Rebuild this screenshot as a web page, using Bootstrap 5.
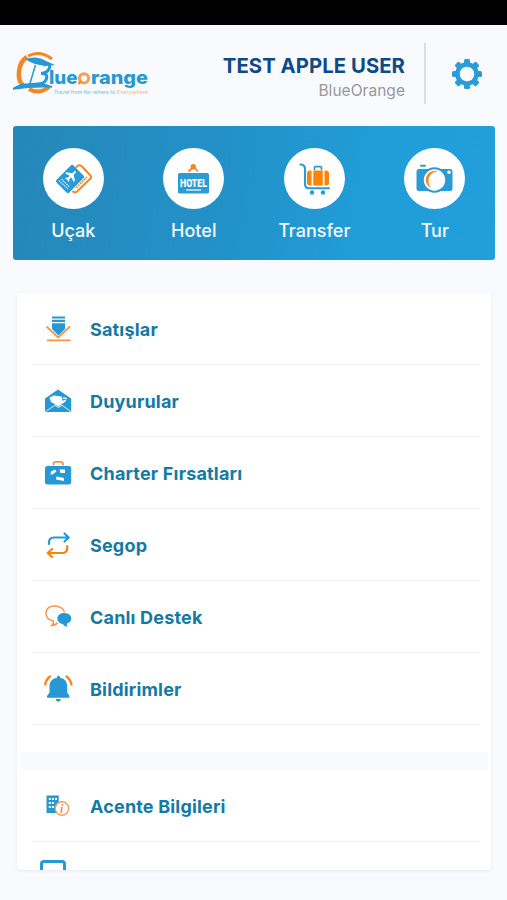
<!DOCTYPE html>
<html lang="tr">
<head>
<meta charset="utf-8">
<meta name="viewport" content="width=device-width, initial-scale=1">
<title>BlueOrange</title>
<link href="https://cdn.jsdelivr.net/npm/bootstrap@5.3.0/dist/css/bootstrap.min.css" rel="stylesheet">
<style>
body{font-family:Inter,"Liberation Sans",sans-serif;background:#f9fafe;height:900px;overflow:hidden}
.status-strip{height:25px;background:#000}
.top-head{height:101px;padding:0 25px 4px 13px}
.user-box{padding-top:9px}
.user-name{font-size:20.3px;font-weight:700;line-height:24px;color:#0e4a87;letter-spacing:.06px}
.user-firm{font-size:15.5px;line-height:25px;color:#96979b;letter-spacing:.04px}
.split{width:2px;height:61px;background:#dcdee2;margin:0 26px 0 19px}
.services{margin:0 12px 0 13px;height:134px;border-radius:3px;background:linear-gradient(100deg,#2687b9 0%,#2293cb 50%,#219ed9 75%,#229eda 100%);padding-top:22px}
.service{color:#f4fbff;font-size:18px;font-weight:500;line-height:24px}
.disc{width:61px;height:61px;margin-bottom:10px}
.menu-card{margin:33px 16px 0 17px;height:577px;border-radius:4px;background:#fff;box-shadow:0 1px 3px rgba(50,70,110,.09)}
.menu-row{height:72px;margin:0 12px 0 15px;padding:2px 0 0 11px;border-bottom:1px solid #eeeff1;color:#147aa3;font-size:18px;font-weight:700;line-height:24px;letter-spacing:.18px}
.menu-row svg{width:30px;height:30px;margin:-2px 17px 0 0}
.band{height:18px;margin:27px 3px 0;background:#f9fafd}
</style>
</head>
<body>
<div class="status-strip"></div>
<header class="top-head d-flex align-items-center">
  <svg width="137" height="46" viewBox="0 0 137 46" role="img" aria-label="BlueOrange">
    <g fill="none" stroke="#f5851f">
      <path d="M14 6C4 12 4 30 10 34" stroke-width="4.5"/>
      <path d="M15 5Q27-1 39 8" stroke-width="3"/>
      <path d="M16 38Q26 44 36 36" stroke-width="4"/>
    </g>
    <path d="M12 8Q24 4 33 10L42 14Q25 17 12 8Z" fill="#2699d4"/>
    <path d="M0 38Q6 33 15 33Q28 31 39 36Q20 35 0 38Z" fill="#2699d4" stroke="#2699d4" stroke-width="1.6"/>
    <path d="M22.5 14L16.5 34" stroke="#2699d4" stroke-width="1.5"/>
    <path d="M30 14Q39 11 36 18Q34 22 28 22.5Q36 22 33 29Q31 33 24 33" fill="none" stroke="#2699d4" stroke-width="3"/>
    <g font-family="Inter,sans-serif" font-weight="800" font-size="18.5" fill="#2699d4">
      <text x="36" y="33" textLength="28.500" lengthAdjust="spacingAndGlyphs">lue</text>
      <text x="78" y="33" textLength="57" lengthAdjust="spacingAndGlyphs">range</text>
    </g>
    <circle cx="71" cy="27.3" r="4.6" fill="none" stroke="#f5a052" stroke-width="3"/>
    <path d="M65.500 33l2.500-3" stroke="#f5851f" stroke-width="2"/>
    <g font-family="Inter,sans-serif" font-size="5" font-weight="500">
      <text x="41" y="42.500" fill="#7fc0e3" textLength="61">Travel from No-where to</text>
      <text x="104" y="42.500" fill="#f8b683" textLength="31">Everywhere</text>
    </g>
  </svg>
  <div class="user-box ms-auto text-end">
    <div class="user-name">TEST APPLE USER</div>
    <div class="user-firm">BlueOrange</div>
  </div>
  <div class="split"></div>
  <svg width="30" height="30" viewBox="-15 -15 30 30" aria-label="Ayarlar">
    <g fill="#2a9dd8"><rect x="-3" y="-15" width="6" height="30" rx="1.5"/><rect x="-3" y="-15" width="6" height="30" rx="1.5" transform="rotate(45)"/><rect x="-3" y="-15" width="6" height="30" rx="1.5" transform="rotate(90)"/><rect x="-3" y="-15" width="6" height="30" rx="1.5" transform="rotate(135)"/><circle r="11.8"/></g>
    <circle r="7.3" fill="#f9fafe"/>
  </svg>
</header>

<nav class="services row g-0 text-center">
  <div class="service col-3">
    <svg class="disc d-block mx-auto" viewBox="0 0 61 61"><circle cx="30.5" cy="30.5" r="30.5" fill="#fff"/>
      <path d="M33 19.5L35 17.5Q37 16.5 39 18.5L47.5 27.5Q49 29 47.5 30.5L34 43.5Q32 45.5 29.5 43" fill="none" stroke="#f5851f" stroke-width="1.9"/>
      <path d="M33 40L44 29" stroke="#f5851f" stroke-width="1.6" stroke-dasharray="2 .8"/>
      <rect x="-12" y="-9" width="24" height="18" rx="2" transform="translate(27 31) rotate(-45)" fill="#2b9bd3"/>
      <g transform="translate(28.5 27.5) rotate(45) scale(.95)" fill="#fff"><path d="M0-7Q1.3-6 1.3-2L6.5 1.5V3L1.3 1.5 1 4.5 2.8 6V7L0 6.3-2.8 7V6L-1 4.5-1.3 1.5-6.5 3V1.5L-1.3-2Q-1.3-6 0-7Z"/></g>
      <path d="M16 32.5L25 41M18.5 31L26.5 39" stroke="#d6edfa" stroke-width="1.2" stroke-dasharray="1.6 .7"/>
    </svg>Uçak</div>
  <div class="service col-3">
    <svg class="disc d-block mx-auto" viewBox="0 0 61 61"><circle cx="30.5" cy="30.5" r="30.5" fill="#fff"/>
      <path d="M25.5 23.5L30.5 19L35 23.5" fill="none" stroke="#f5851f" stroke-width="1.7"/><circle cx="30.3" cy="18.8" r="2.7" fill="#f5851f"/>
      <rect x="15" y="25" width="31" height="20.5" rx="1.5" fill="#2b9bd3"/>
      <text x="17" y="38.8" font-family="Roboto,sans-serif" font-size="11.5" font-weight="900" fill="#fff" textLength="27" lengthAdjust="spacingAndGlyphs">HOTEL</text>
      <path d="M23 42H38" stroke="#fff" stroke-width="1.2"/>
    </svg>Hotel</div>
  <div class="service col-3">
    <svg class="disc d-block mx-auto" viewBox="0 0 61 61"><circle cx="30.5" cy="30.5" r="30.5" fill="#fff"/>
      <path d="M16.5 16.5Q21 16.5 21 21V36Q21 40.2 25 40.2H45" fill="none" stroke="#2b9bd3" stroke-width="2.1" stroke-linecap="round"/>
      <path d="M30.5 22V19.5Q30.5 18.7 31.5 18.7H36.5Q37.5 18.7 37.5 19.5V22" fill="none" stroke="#2b9bd3" stroke-width="1.7"/>
      <g fill="#f98407"><path d="M27.5 22.5V37.5H26Q23 37.5 23 34.5V25.5Q23 22.5 26 22.5Z"/><rect x="29.3" y="22.5" width="9.5" height="15"/><path d="M40.5 22.5H42Q45 22.5 45 25.5V34.5Q45 37.5 42 37.5H40.5Z"/></g>
      <circle cx="28" cy="44.5" r="2.2" fill="#2b9bd3"/><circle cx="39" cy="44.5" r="2.2" fill="#2b9bd3"/>
    </svg>Transfer</div>
  <div class="service col-3">
    <svg class="disc d-block mx-auto" viewBox="0 0 61 61"><circle cx="30.5" cy="30.5" r="30.5" fill="#fff"/>
      <rect x="16" y="16.7" width="6" height="2" rx="1" fill="#2b9bd3"/>
      <rect x="12.5" y="21" width="36" height="22" rx="2.5" fill="#2b9bd3"/><circle cx="30.5" cy="32" r="12.8" fill="#2b9bd3"/><circle cx="30.5" cy="32" r="10.7" fill="#fff"/>
      <path d="M27.5 40.8Q20 36 22.2 29Q25 21.5 35 23Q26.5 24 24.7 30Q23.5 36 27.5 40.8Z" fill="#f5851f"/>
      <circle cx="45" cy="24.3" r="1.8" fill="#fff"/>
    </svg>Tur</div>
</nav>

<main class="menu-card overflow-hidden">
  <div class="menu-row d-flex align-items-center">
    <svg viewBox="0 0 30 30"><g fill="#2699d4"><path d="M9 2.5H22V4.5H9ZM9 5.8H22V8H9ZM9 9.2H22V15L15.5 21.5 9 15Z"/></g><path d="M3.5 12.5L15.2 23.5 27 12.5M4 26.3H27.5" fill="none" stroke="#f3954a" stroke-width="1.8"/></svg>
    Satışlar</div>
  <div class="menu-row d-flex align-items-center">
    <svg viewBox="0 0 30 30"><path d="M2 12.5L15 3.5 28.2 12.5V24Q28.2 26 26 26H4Q2 26 2 24Z" fill="#2699d4"/><path d="M6.5 11.5L11 9.5 18 10.5 24 12 22.5 15.5 15.5 20.5 8 16Z" fill="#fff"/><path d="M19.5 9.5L20 14 23 13" fill="none" stroke="#2699d4" stroke-width="1.2"/><path d="M3.5 24.8L12 19.3 15.5 21.5 19 19.3 27 24.8" fill="none" stroke="#d8eefb" stroke-width="1"/></svg>
    Duyurular</div>
  <div class="menu-row d-flex align-items-center">
    <svg viewBox="0 0 30 30"><path d="M10.5 7.5V6Q10.5 3.8 12.5 3.8H17.8Q20 3.8 20 6V7.5" fill="none" stroke="#f3954a" stroke-width="1.8"/><rect x="2" y="8" width="26.2" height="18.5" rx="2.5" fill="#2699d4"/><g fill="#fff"><path d="M8 13.5L12 11.5 13.5 13.5 9.5 16.5 7.5 16.5ZM16.5 11.5H22V15H17.5ZM13.5 18.5L21 20V23L13 21.5Z"/></g></svg>
    Charter Fırsatları</div>
  <div class="menu-row d-flex align-items-center">
    <svg viewBox="0 0 30 30" fill="none" stroke-width="2.2" stroke-linecap="round" stroke-linejoin="round"><path d="M6 14V12.5Q6 7.5 11 7.5H25.5M21.5 3.5L25.7 7.5 21.5 11.5" stroke="#2699d4"/><path d="M24.2 16V18Q24.2 23 19.2 23H5M9 19L4.7 23 9 27" stroke="#f98407"/></svg>
    Segop</div>
  <div class="menu-row d-flex align-items-center">
    <svg viewBox="0 0 30 30"><path d="M21.5 10.3C20 2.5 3 1 3 11C3 15 6 18 10 18.8Q11.3 21.5 8.7 23.5Q12.5 23.5 14.5 20.5" fill="none" stroke="#f3954a" stroke-width="1.4"/><path d="M21 11C26 11 28.3 13.8 28.3 16.5C28.3 19 26.5 20.7 24 21.6Q23.5 23.5 24.7 24.7Q21 24.5 19.7 22C16.5 21.6 14.3 19.2 14.3 16.5C14.3 13.5 17 11 21 11Z" fill="#2699d4"/></svg>
    Canlı Destek</div>
  <div class="menu-row d-flex align-items-center">
    <svg viewBox="0 0 30 30"><path d="M14 3Q14 1.5 15.3 1.5T17 3V3.7C22 4.5 24.2 8 24.2 12V18.5L26.5 22V23.7H4V22L6.5 18.5V12C6.5 8 9 4.5 14 3.7Z" fill="#2699d4"/><path d="M12.5 25H18Q17.5 27.7 15.3 27.7T12.5 25" fill="#2699d4"/><path d="M7 2.5Q3 5.5 2.3 10.5M23.5 2.5Q27.5 5.5 28.5 10.5" fill="none" stroke="#f5851f" stroke-width="2.3" stroke-linecap="round"/></svg>
    Bildirimler</div>
  <div class="band"></div>
  <div class="menu-row d-flex align-items-center">
    <svg viewBox="0 0 30 30"><path d="M3.5 4.5H15.7V22H3.5Z" fill="#2699d4"/><g fill="#fff"><path d="M5.8 7h2v2h-2zM8.9 7h2v2h-2zM12 7h2v2h-2zM5.8 11h2v2h-2zM8.9 11h2v2h-2zM5.8 15h2v2h-2zM8.9 15h2v2h-2z"/></g><circle cx="19" cy="17.5" r="6.7" fill="#fff" stroke="#f3a15e" stroke-width="1.4"/><text x="17" y="21.7" font-family="Liberation Serif,serif" font-size="12" font-style="italic" font-weight="700" fill="#f39148">i</text></svg>
    Acente Bilgileri</div>
  <div class="ps-4"><svg class="d-block" width="26" height="28" viewBox="0 0 26 28" transform="translate(-1 18)"><rect x="1.5" y="1.5" width="23" height="24" rx="2.5" fill="none" stroke="#2699d4" stroke-width="3"/></svg></div>
</main>
</body>
</html>
